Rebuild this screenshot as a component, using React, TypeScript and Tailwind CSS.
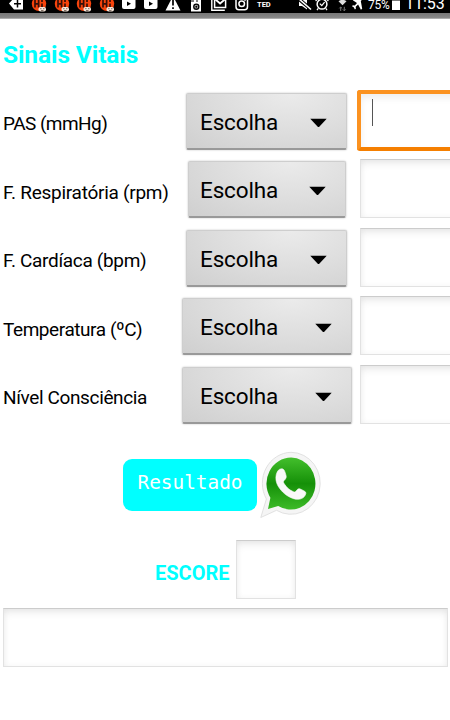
import type { ReactNode } from "react";

interface Vital {
  label: string;
  tracking: string;
  spinner: string;
  text: string;
  focused?: boolean;
}

const VITALS: Vital[] = [
  { label: "PAS (mmHg)", tracking: "tracking-[-0.55px]", spinner: "ml-[186px] w-[161px]", text: "pl-[13px]", focused: true },
  { label: "F. Respiratória (rpm)", tracking: "tracking-[-0.27px]", spinner: "ml-[188px] w-[158px]", text: "pl-[11px]" },
  { label: "F. Cardíaca (bpm)", tracking: "tracking-[-0.33px]", spinner: "ml-[186px] w-[161px]", text: "pl-[13px]" },
  { label: "Temperatura (ºC)", tracking: "tracking-[-0.43px]", spinner: "ml-[182px] w-[170px]", text: "pl-[17px]" },
  { label: "Nível Consciência", tracking: "tracking-[-0.37px]", spinner: "ml-[182px] w-[170px]", text: "pl-[17px]" },
];

const FIELD =
  "border border-[#e2e2e2] border-t-[#cccccc] bg-white shadow-[inset_0_5px_8px_-2px_rgba(0,0,0,0.09),inset_0_0_6px_rgba(0,0,0,0.04)]";

function Glyph({ width, className, children }: { width: number; className: string; children: ReactNode }) {
  return (
    <svg
      width={width}
      height="13"
      viewBox={`0 0 ${width} 13`}
      fill="white"
      className={`shrink-0 ${className}`}
    >
      {children}
    </svg>
  );
}

function GameIcon({ className }: { className: string }) {
  return (
    <Glyph width={16} className={className}>
      <circle cx="8" cy="3.8" r="7.2" fill="#f8440c" />
      <path d="M4 0v7.5M7.6 0v7.5M4 3.8h3.6M11 3.5V7M11 0v2" stroke="#381008" strokeWidth="1.7" fill="none" />
      <rect x="7.5" y="7" width="7.5" height="4.6" rx="2" fill="#f5e7dc" />
      <path d="M9.2 8.7h1.3M12.1 8.7h1.3M10 10.6h2.5" stroke="#55433a" strokeWidth=".8" />
    </Glyph>
  );
}

function PlayIcon({ className }: { className: string }) {
  return (
    <Glyph width={14} className={className}>
      <rect y="-3" width="13.5" height="12" rx="2" />
      <path d="M5 1.4v4.6l4-2.3z" fill="black" />
    </Glyph>
  );
}

function StatusBar() {
  return (
    <div className="flex h-[13px] w-full bg-black text-white">
      <Glyph width={15} className="ml-[9px]">
        <path d="M0 3.5 5 -2h9v11.5H5z" />
        <path d="M8.5 0v7.5M5 3.7h7" stroke="black" strokeWidth="1.5" />
      </Glyph>
      <GameIcon className="ml-[7px]" />
      <GameIcon className="ml-[7px]" />
      <GameIcon className="ml-[6px]" />
      <GameIcon className="ml-[7px]" />
      <PlayIcon className="ml-[7px]" />
      <PlayIcon className="ml-[8px]" />
      <Glyph width={16} className="ml-[7px]">
        <path d="M8-4 15.5 10.5H.5z" />
        <path d="M8 0v5.5M8 7.2v1.8" stroke="black" strokeWidth="1.7" />
      </Glyph>
      <Glyph width={11} className="ml-[10px]">
        <path d="M0-2h10v13.5H0z" />
        <path d="M0 1h3M5 1h2" stroke="black" />
        <circle cx="5.3" cy="6.7" r="3.2" fill="black" />
        <circle cx="5.3" cy="6.7" r="1.9" fill="#aaa" />
        <circle cx="5.3" cy="6.7" r="1" fill="black" />
      </Glyph>
      <Glyph width={16} className="ml-[9px]">
        <path d="M.8 0v10.2h13" fill="none" stroke="white" strokeWidth="1.4" />
        <path d="M3.6-3v10.4h11V-3" fill="none" stroke="white" strokeWidth="1.5" />
        <path d="m4.5-.5 4.6 4 4.6-4" fill="none" stroke="white" strokeWidth="1.8" />
      </Glyph>
      <Glyph width={14} className="ml-[8px]">
        <rect x="1" y="-3" width="11.5" height="12.7" rx="3" fill="none" stroke="white" strokeWidth="1.5" />
        <circle cx="6.7" cy="3.7" r="2.8" fill="none" stroke="white" strokeWidth="1.5" />
        <circle cx="10" cy=".6" r=".7" />
      </Glyph>
      <span className="ml-[8px] w-[16px] shrink-0 font-['Roboto',sans-serif] text-[7.5px] leading-[9px] font-bold">
        TED
      </span>
      <Glyph width={15} className="ml-[24px]">
        <path d="M2 1h3l5-4v12.5L5 6H2z" />
        <path d="m0-2.5 13 11" stroke="black" strokeWidth="3.6" />
        <path d="M1-2 14 9.5" stroke="white" strokeWidth="1.6" />
      </Glyph>
      <Glyph width={14} className="ml-[3px]">
        <circle cx="7" cy="4.2" r="4.9" fill="none" stroke="white" strokeWidth="1.5" />
        <path d="m4.8 3.6 2 2L9.6 2.2M3.2 8.4 2 10.2M10.8 8.4l1.2 1.8M.6 1l2.6-2.6M13.4 1l-2.6-2.6" fill="none" stroke="white" strokeWidth="1.2" />
      </Glyph>
      <Glyph width={12} className="ml-[8px]">
        <path d="M1.5 1.2Q5.5-1.6 9.5 1.2L5.5 5.2z" fill="#dedede" />
        <path d="M3.7 11V7.2M2.3 8.4 3.7 7l1.4 1.4M7.3 6.8v3.8M5.9 9.4l1.4 1.4 1.4-1.4" fill="none" stroke="#777" />
      </Glyph>
      <Glyph width={13} className="ml-[3px]">
        <path d="M11.8-2 8.8 1l1.4 7.8-1.3 1L6.1 4.5 3.7 6.7l.2 2-1 .8-1.2-2.2L0 6.3l.8-1 2 .1L5 3 .8.3 1.9-.8 7.3-.4 9.5-3z" />
      </Glyph>
      <span className="-mt-px ml-[3px] w-[24px] shrink-0 font-['Roboto',sans-serif] text-[12px] leading-[12px] tracking-[-0.3px]">
        75%
      </span>
      <span className="h-[10px] w-[8px] shrink-0 border-t border-[#777] bg-white" />
      <span className="mt-[-6px] ml-[5px] shrink-0 font-['Roboto',sans-serif] text-[16px] leading-[19px] whitespace-nowrap">
        11:53
      </span>
    </div>
  );
}

function Spinner({ className, text }: { className: string; text: string }) {
  return (
    <button
      type="button"
      className={`flex h-[57px] shrink-0 items-center justify-between rounded-[2px] border border-[#cecece] border-b-2 border-b-[#999999] bg-[radial-gradient(ellipse_at_65%_0%,#ebebeb_0%,#dcdcdc_55%,#cfcfcf_100%)] shadow-[0_0_2px_rgba(0,0,0,0.25)] ${className}`}
    >
      <span className={`pt-[3px] font-['Roboto',sans-serif] text-[22.5px] leading-[27px] tracking-[-0.15px] text-black ${text}`}>
        Escolha
      </span>
      <svg width="17" height="10" viewBox="0 0 17 10" className="mt-[4px] mr-[19px]">
        <path d="M.3.7h16.4L9.5 8.5q-1 1-2 0z" fill="black" />
      </svg>
    </button>
  );
}

function VitalRow({ label, tracking, spinner, text, focused }: Vital) {
  return (
    <div className="grid h-[68.6px] grid-cols-[357px_93px]">
      <div className="grid pt-[5.5px]">
        <label
          className={`col-start-1 row-start-1 pt-[19.5px] pl-[3px] font-['Roboto',sans-serif] text-[19px] leading-[24px] whitespace-nowrap text-black ${tracking}`}
        >
          {label}
        </label>
        <div className="col-start-1 row-start-1">
          <Spinner className={spinner} text={text} />
        </div>
      </div>
      {focused ? (
        <div className="mt-[3px] h-[61px] w-[110px] rounded-[3px] border-4 border-[#fb9220] border-b-[#f57f00] bg-white pt-[5px] pl-[11px] shadow-[inset_0_4px_7px_rgba(0,0,0,0.07)]">
          <div className="h-[27px] w-px bg-[#555]" />
        </div>
      ) : (
        <div className={`mt-[3.5px] ml-[3px] h-[59px] w-[110px] ${FIELD}`} />
      )}
    </div>
  );
}

function WhatsAppIcon() {
  return (
    <svg width="62" height="68" viewBox="0 0 62 68" className="shrink-0">
      <defs>
        <linearGradient id="wa" x1="0" y1="0" x2="0" y2="1">
          <stop offset="0" stopColor="#43bf2c" />
          <stop offset=".5" stopColor="#159008" />
          <stop offset="1" stopColor="#3dbb28" />
        </linearGradient>
      </defs>
      <path
        d="M31 2.3a29.3 31 0 1 1-14.5 58L.8 67.5 6.4 49A29.3 31 0 0 1 31 2.3z"
        fill="#f5f5f5"
        stroke="#dedede"
        strokeWidth=".9"
      />
      <path d="M31.2 7.6a24.7 26 0 1 1-13 48.4L8 59l2.4-11.3A24.7 26 0 0 1 31.2 7.6z" fill="url(#wa)" />
      <path
        d="M17.2 22c1.5-3 4-3.6 5.6-3 1.7.7 2.3 3.4 3.1 5.9.8 2.4.3 3.4-1.8 5.6-1.1 1.2-.7 2 .3 3.5 2.6 3.9 5.2 6.1 9 7.7 1.3.5 1.8.4 2.6-.6 1.6-2 2.4-2.8 3.7-2.3 2 .8 5.3 2.4 6 3.4.8 1.3-1 4.7-3.2 5.9-4.1 2.3-8.4 1.2-13.1-1.2-6.8-3.4-11.6-10.2-12.8-14.2-1.1-3.6-1-7.5.6-10.7z"
        fill="#f9f9f9"
        stroke="#f9f9f9"
        strokeWidth=".6"
      />
    </svg>
  );
}

export default function App() {
  return (
    <div className="h-[720px] w-[450px] overflow-hidden bg-white">
      <StatusBar />
      <div className="h-[6px] bg-linear-to-b from-[#777] via-[#898989] via-80% to-[#c8c8c8]" />

      <h1 className="h-[68px] pt-[21px] pl-[3px] font-['Roboto',sans-serif] text-[24.5px] leading-[30px] font-bold tracking-[-0.1px] text-[#00ffff]">
        Sinais Vitais
      </h1>

      {VITALS.map((vital) => (
        <VitalRow key={vital.label} {...vital} />
      ))}

      <div className="mt-[20px] flex h-[68px] pl-[123px]">
        <button
          type="button"
          className="mt-[9px] h-[52px] w-[134px] rounded-[9px] bg-[#00ffff] pb-[3px] font-['DejaVu_Sans_Mono',monospace] text-[19.4px] leading-[24px] text-white"
        >
          Resultado
        </button>
        <div className="ml-[3px]">
          <WhatsAppIcon />
        </div>
      </div>

      <div className="mt-[22px] flex h-[59px] items-center pl-[155px]">
        <span className="w-[81px] pt-[8px] font-['Roboto',sans-serif] text-[20px] leading-[24px] font-bold text-[#00ffff]">
          ESCORE
        </span>
        <div className={`h-[59px] w-[60px] ${FIELD}`} />
      </div>

      <div className={`mt-[9px] ml-[3px] h-[59px] w-[445px] ${FIELD}`} />
    </div>
  );
}
